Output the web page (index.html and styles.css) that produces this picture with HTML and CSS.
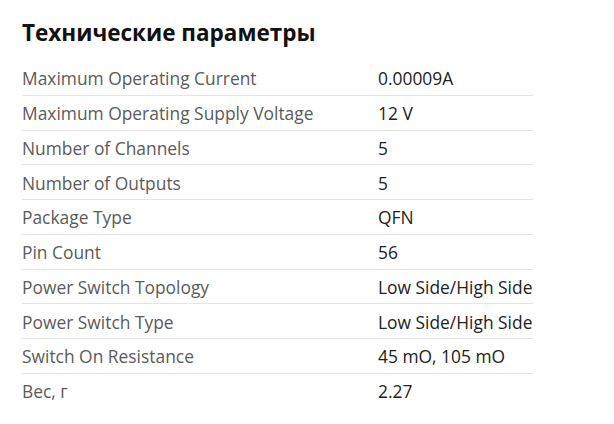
FILE: index.html
```html
<!DOCTYPE html>
<html lang="ru">
<head>
<meta charset="utf-8">
<link rel="stylesheet" href="styles.css">
</head>
<body>
<div class="wrap">
  <h2 class="title">Технические параметры</h2>
  <div class="specs">
    <div class="row"><div class="label">Maximum Operating Current</div><div class="value">0.00009A</div></div>
    <div class="row"><div class="label">Maximum Operating Supply Voltage</div><div class="value">12 V</div></div>
    <div class="row"><div class="label">Number of Channels</div><div class="value">5</div></div>
    <div class="row"><div class="label">Number of Outputs</div><div class="value">5</div></div>
    <div class="row"><div class="label">Package Type</div><div class="value">QFN</div></div>
    <div class="row"><div class="label">Pin Count</div><div class="value">56</div></div>
    <div class="row"><div class="label">Power Switch Topology</div><div class="value">Low Side/High Side</div></div>
    <div class="row"><div class="label">Power Switch Type</div><div class="value">Low Side/High Side</div></div>
    <div class="row"><div class="label">Switch On Resistance</div><div class="value">45 mO, 105 mO</div></div>
    <div class="row"><div class="label">Вес, г</div><div class="value">2.27</div></div>
  </div>
</div>
</body>
</html>
```
FILE: styles.css
```css
html, body {
  margin: 0;
  padding: 0;
  background: #fff;
}
body {
  font-family: "Open Sans", "Noto Sans", sans-serif;
}
.wrap {
  padding: 18px 22px;
}
.title {
  margin: 0 0 13px 0;
  font-size: 22.5px;
  line-height: 30px;
  font-weight: 700;
  color: #111;
}
.specs {
  width: 511px;
}
.row {
  display: grid;
  grid-template-columns: 356px 1fr;
  height: 32.75px;
  padding-top: 1px;
  align-items: center;
  border-bottom: 1px solid #e5e5e5;
  font-size: 17.4px;
  white-space: nowrap;
}
.row:last-child {
  border-bottom: none;
}
.label {
  color: #5b5b5b;
}
.value {
  color: #222;
  overflow: hidden;
}
```
